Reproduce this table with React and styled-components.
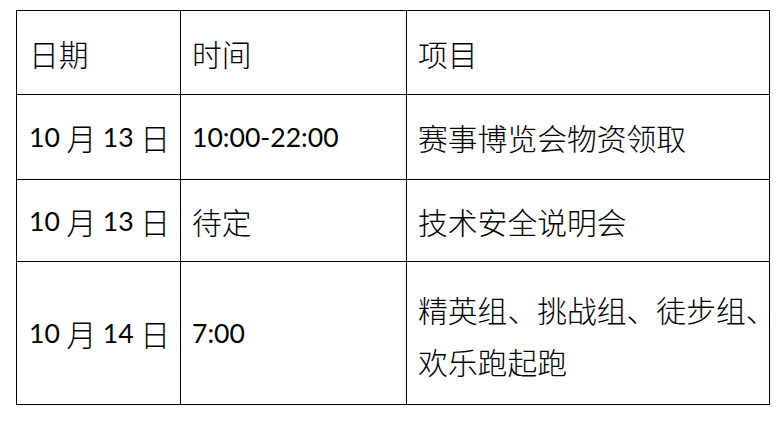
import React from "react";
import styled, { createGlobalStyle } from "styled-components";

const GlobalStyle = createGlobalStyle`
  body {
    margin: 0;
    background: #fff;
  }
`;

const Page = styled.div`
  padding: 10px 0 0 16px;
  width: 784px;
  height: 424px;
  box-sizing: border-box;
  background: #fff;
`;

const Table = styled.div`
  display: grid;
  grid-template-columns: 163px 225px 362px;
  grid-template-rows: 83px 84px 81px 142px;
  gap: 1px;
  padding: 1px;
  width: max-content;
  background: #000;
`;

const Cell = styled.div`
  display: flex;
  align-items: center;
  padding-left: ${(p) => p.$pad || 11}px;
  background: #fff;
  color: #000;
  font-family: "Noto Sans CJK SC", "Noto Sans", sans-serif;
  font-weight: 300;
  font-size: 29.8px;
  white-space: nowrap;
`;

const Num = styled.span`
  font-family: Lato, "Liberation Sans", sans-serif;
  font-weight: 400;
  font-size: 26.6px;
`;

const Lines = styled.div`
  line-height: 52px;
  padding-top: 4px;
`;

const rows = [
  { date: "13", time: <Num>10:00-22:00</Num>, item: "赛事博览会物资领取" },
  { date: "13", time: "待定", item: "技术安全说明会" },
  {
    date: "14",
    time: <Num>7:00</Num>,
    item: (
      <Lines>
        精英组、挑战组、徒步组、
        <br />
        欢乐跑起跑
      </Lines>
    ),
  },
];

export default function App() {
  return (
    <Page>
      <GlobalStyle />
      <Table>
        <Cell $pad={12}>日期</Cell>
        <Cell>时间</Cell>
        <Cell>项目</Cell>
        {rows.map((r, i) => (
          <React.Fragment key={i}>
            <Cell $pad={12}>
              <Num>10</Num>&nbsp;月&nbsp;<Num>{r.date}</Num>&nbsp;日
            </Cell>
            <Cell>{r.time}</Cell>
            <Cell>{r.item}</Cell>
          </React.Fragment>
        ))}
      </Table>
    </Page>
  );
}
